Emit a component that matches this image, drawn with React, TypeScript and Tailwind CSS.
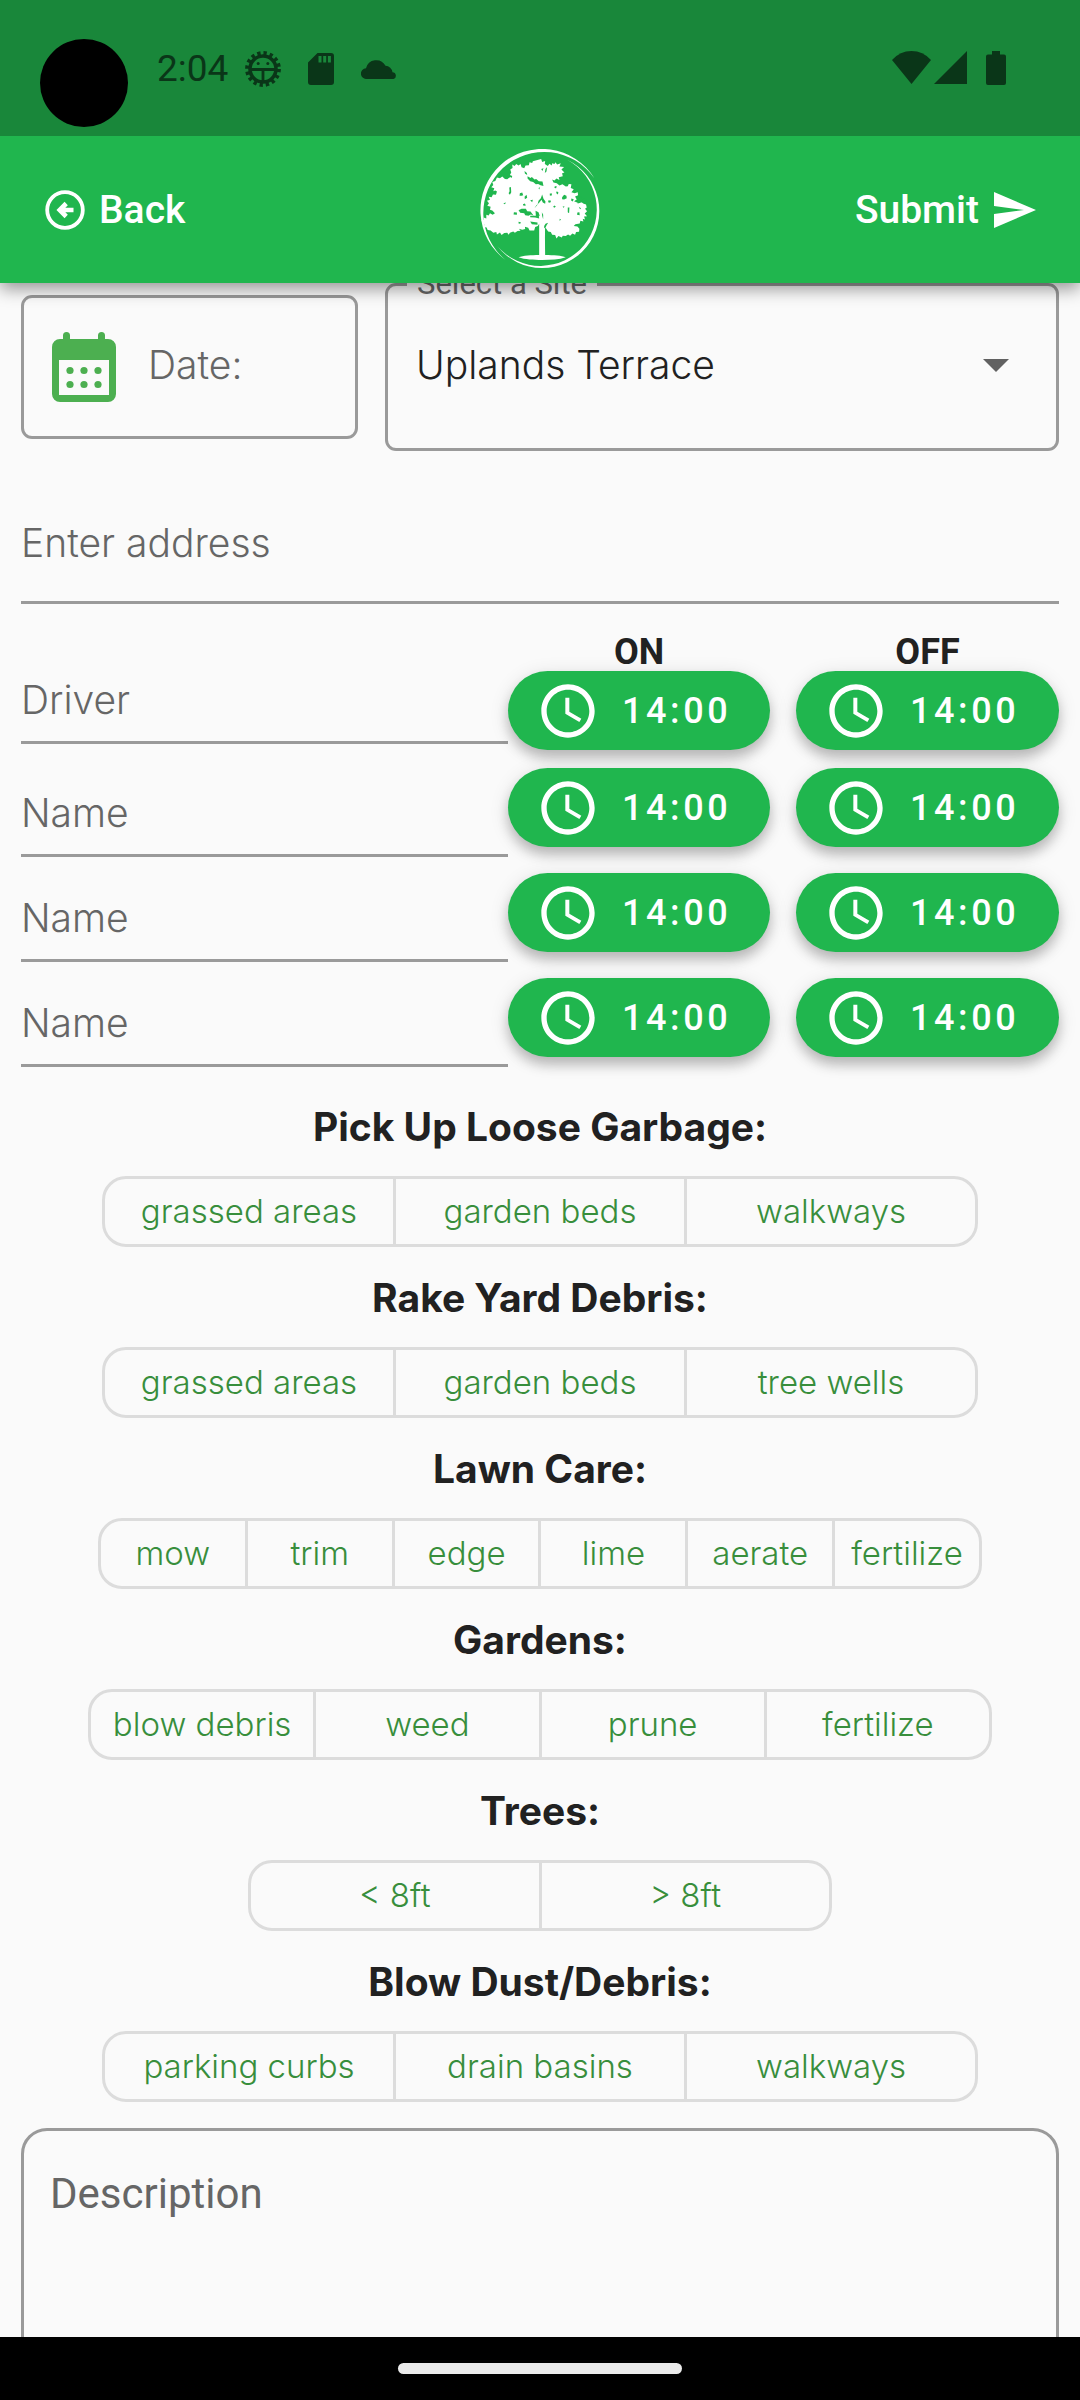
import React from 'react';

const sans = "font-['Inter','Noto_Sans',sans-serif]";

function DebugIcon() {
  return (
    <svg viewBox="0 0 36 36" className="size-[36px]" fill="none" stroke="currentColor" aria-hidden="true">
      <circle cx="18" cy="18" r="13" strokeWidth="3.6" />
      <circle cx="18" cy="18" r="16" strokeWidth="3.8" strokeDasharray="3.3 2.983" />
      <path d="M5 18.5h26M18 18.5v13" strokeWidth="2.8" />
      <g fill="currentColor" stroke="none">
        <circle cx="13.2" cy="12.6" r="1.5" />
        <circle cx="22.8" cy="12.6" r="1.5" />
      </g>
    </svg>
  );
}

function SdCardIcon() {
  return (
    <svg viewBox="0 0 26 32" className="h-[32px] w-[26px]" fill="currentColor" aria-hidden="true">
      <path
        fillRule="evenodd"
        d="M9.5 0H23a3 3 0 0 1 3 3v26a3 3 0 0 1-3 3H3a3 3 0 0 1-3-3V9.5zM10.500 3v6.500h3V3zm4.700 0v6.500h3V3zm4.700 0v6.500h3V3z"
      />
    </svg>
  );
}

function CloudIcon() {
  return (
    <svg viewBox="0 0 36 20" className="h-[20px] w-[36px]" fill="currentColor" aria-hidden="true">
      <path d="M5.500 20A5.300 5.300 0 0 1 5 9.300 10.500 10.500 0 0 1 24.500 6.800a7.200 7.200 0 0 1 7 6.400A3.500 3.500 0 0 1 32.500 20z" />
    </svg>
  );
}

function StatusBar() {
  return (
    <div className="relative z-20 flex h-[136px] shrink-0 items-start justify-between bg-[#19873a] text-[#0a3618]">
      <div className="flex items-center pl-10 pt-[25px]">
        <span className="mt-[14px] size-[88px] rounded-full bg-black" />
        <div className="flex items-center pb-[14px] pl-[29px]">
          <span className="w-[88px] text-[37px] leading-[44px]">2:04</span>
          <DebugIcon />
          <span className="pl-[27px]"><SdCardIcon /></span>
          <span className="pl-[27px]"><CloudIcon /></span>
        </div>
      </div>
      <div className="flex items-start pr-[74px] pt-[51px]">
        <svg viewBox="0 0 39 33" className="h-[33px] w-[39px]" fill="currentColor" aria-hidden="true">
          <path d="M0 9Q8 0 19.500 0T39 9L19.500 33z" />
        </svg>
        <svg viewBox="0 0 33 33" className="ml-[3px] size-[33px]" fill="currentColor" aria-hidden="true">
          <path d="M33 0v33H0z" />
        </svg>
        <svg viewBox="0 0 20 34" className="ml-[19px] h-[34px] w-[20px]" fill="currentColor" aria-hidden="true">
          <path d="M6 0h8v3.500h4q2 0 2 2V32q0 2-2 2H2q-2 0-2-2V5.500q0-2 2-2h4z" />
        </svg>
      </div>
    </div>
  );
}

function TreeLogo() {
  return (
    <svg viewBox="56 40 364 364" className="size-[121px]" fill="#fff" role="img" aria-label="Tree logo">
      <path d="M133 374A185 185 0 1 1 400 128A183.300 183.300 0 1 0 133 374Z" />
      <path d="M318 72A171.600 171.600 0 1 1 108 332A170 170 0 1 0 318 72Z" />
      <path d="M234 250h18c0 20-1 70 0 109 25 0 50 2 62 7-20 7-45 8-71 8s-52-1-71-8c14-5 38-7 62-7z" />
      <path d="M240 70l3 9 9-3-1 9 9 6 5-7 7 6 1-7 7 2 3-5 5 7 11-4-4 10 14 1-8 8 9 9-7 2 2 9-12 3 2 8-9-4-6 6-7-3 4 9 10 2 8 7 9-4 10 7 6-1 3-7 8 1-2 11 9 4-7 9 10 3 9-3 1 9-9 4 5 9-8 5 9 4 9-4 11 8 7 2 2 9-5 4 6 7-7 7 7 8-9 1 3 9-7-2 2 8-9-2-2 8-13 2-5 6 11 1 6 7-1 9-9 1-3 8-8-4-7 7-6-4-7 5-9-1-3 5-10-4-6 7-4-10-9-1-4-8-8-2-6-9-9-5-5-7-7-2-4 7-8 3-3 10h-14l-4-8-10-3 1 7-9 2-10-3 5 6-9 1-8 5-5-4-10 4-4 6-4-6-9 1-8 6-5-8-9 6-2-7-9 2-8-7-9-1-3-8-10-1 4-7-7-4 4-3-8-5 9-3-1-7 8 3 0-11 7 2 4-7 8 5 7-5-8-8-7-2 2-9-10-3 5-8-6-7 9-3-4-9 9 1 4-8 9 1 3-10-5-3-6 2 3-9-9-3 6-7-3-9 9-3 5-10 9 2 7-5 8 7 7 1 9-7 4 3 2-6-7-3 4-7-3-9 7-5-1-10 7 4 5-6 7 5 6-5 3 10 8 3 4-8 10-1 2-9 8 2 2-5z" />
      <g fill="#20b64e">
        <path d="M199 122l9 5 4-3 8 8 5-2 8 7 11 1 3 13-9-2-7-4-7 1-8-7-9-2-8-8zM190 106l7 6 1 6-7-4zM240 100l7-2-3 8zM253 100l5-6-2 14-5 4z" />
        <path d="M172 224l9-4 13 0 4 7 10 1 9 12-8-3-7 4-10-2-3-6-12-1zM158 230l9 1 0 7-10-1zM220 218l9-10 3-12 7-8 4-11 4 13 6 8-1 7-7-4-4-8-7 9-9 8zM223 226l9 4 4 12-3-2 1 9-12-3-15-1 0-4 17 0zM242 230l4 8 0 13-3-10zM207 258l22 3 0 7-17-2zM249 272l4-7 8-3-5 8-4 9-3-2z" />
        <path d="M176 173l7-2 3 8-5 2-6 0zM144 156l5-2 1 16-4 8-4-5 3-6zM190 184l6-6 2 9-7 4zM207 194l8-1-2 7zM185 206l6-2 3 6-7 1zM232 157l5-2-3 7zM266 174l7 0-2 7-5-1zM262 194l8 2-3 6-6-2zM281 152l6 0-2 6-5-1zM287 167l5 4-2 6-5-5zM303 185l6-7 7 3 1 7-8 4-6-1zM276 213l5-3 3 4-5 3zM305 212l6 2-5 3zM331 189l7 2-3 7-5-3zM348 199l10-3 11-6 10 4-8 2 9 10-6-1-7-7-9 4-8 2zM353 181l10 4 0 3-10-2zM320 216l5 0-1 17-4-3zM349 231l6-1 1 9-8-1zM353 214l7 4-3 3zM172 259l7 1-2 5-5-1zM126 203l8-2-3 5zM296 250l4 3-5 3z" />
      </g>
    </svg>
  );
}

function AppBar() {
  return (
    <header className="relative z-10 grid h-[147px] shrink-0 grid-cols-[1fr_auto_1fr] items-center bg-[#20b64e] px-[44px] text-white shadow-[0_6px_16px_rgba(0,0,0,0.4)]">
      <button type="button" className="flex items-center gap-[13px] justify-self-start text-[39px] font-medium leading-[46px]">
        <svg viewBox="0 0 42 42" className="size-[42px]" fill="none" stroke="currentColor" aria-hidden="true">
          <circle cx="21" cy="21" r="17.800" strokeWidth="3.800" />
          <path d="M29.500 21H16M22.200 14.500L15.700 21l6.500 6.500" strokeWidth="4.600" />
        </svg>
        Back
      </button>
      <TreeLogo />
      <button type="button" className="flex items-center gap-[15px] justify-self-end text-[39px] font-medium leading-[46px]">
        Submit
        <svg viewBox="2 3 21 18" className="h-[36px] w-[42px]" fill="currentColor" aria-hidden="true">
          <path d="M2.010 21L23 12 2.010 3 2 10l15 2-15 2z" />
        </svg>
      </button>
    </header>
  );
}

function SiteRow() {
  return (
    <div className="grid grid-cols-[minmax(0,1fr)_minmax(0,2fr)] items-center gap-[27px]">
      <label className="flex h-[144px] items-center gap-[32px] rounded-[11px] border-[3px] border-[#9a9a9a] pl-[28px]">
        <svg viewBox="0 0 64 70" className="h-[70px] w-[64px] shrink-0" fill="#4caf50" aria-hidden="true">
          <path
            fillRule="evenodd"
            d="M11 7V3.500a3.500 3.500 0 0 1 7 0V7h28V3.500a3.500 3.500 0 0 1 7 0V7h3a8 8 0 0 1 8 8v47a8 8 0 0 1-8 8H8a8 8 0 0 1-8-8V15a8 8 0 0 1 8-8zM7 28v35h50V28z"
          />
          <circle cx="18" cy="38.500" r="3.600" />
          <circle cx="32" cy="38.500" r="3.600" />
          <circle cx="46" cy="38.500" r="3.600" />
          <circle cx="18" cy="52.500" r="3.600" />
          <circle cx="32" cy="52.500" r="3.600" />
          <circle cx="46" cy="52.500" r="3.600" />
        </svg>
        <input
          aria-label="Date"
          placeholder="Date:"
          className={`${sans} w-full min-w-0 bg-transparent pb-1 text-[39px] font-light leading-[48px] outline-none placeholder:text-[#666] placeholder:opacity-100`}
        />
      </label>
      <div className="relative h-[168px]">
        <select
          id="site"
          className={`${sans} size-full appearance-none rounded-[11px] border-[3px] border-[#9a9a9a] bg-transparent pb-1 pl-[28px] pr-[80px] text-[39px] font-light text-[#212121] outline-none`}
        >
          <option>Uplands Terrace</option>
        </select>
        <label htmlFor="site" className="absolute -top-[17px] left-[22px] bg-[#fafafa] px-[10px] text-[31px] leading-[36px] text-[#666]">
          Select a Site
        </label>
        <svg viewBox="0 0 26 13" className="pointer-events-none absolute right-[50px] top-[76px] h-[13px] w-[26px]" fill="#616161" aria-hidden="true">
          <path d="M0 0h26L13 13z" />
        </svg>
      </div>
    </div>
  );
}

function TimeButton({ label }: { label: string }) {
  return (
    <button
      type="button"
      aria-label={label}
      className="flex h-[79px] w-full items-center rounded-full bg-[#20b64e] pl-[28px] text-white shadow-[0_8px_12px_rgba(0,0,0,0.2),0_4px_20px_rgba(0,0,0,0.12)]"
    >
      <svg viewBox="0 0 24 24" className="size-[64px]" fill="currentColor" aria-hidden="true">
        <path d="M11.990 2C6.470 2 2 6.480 2 12s4.470 10 9.990 10C17.520 22 22 17.520 22 12S17.520 2 11.990 2zM12 20c-4.420 0-8-3.580-8-8s3.580-8 8-8 8 3.580 8 8-3.580 8-8 8zM12.500 7H11v6l5.250 3.150.75-1.230-4.500-2.670z" />
      </svg>
      <span className="pl-[22px] text-[36px] font-medium leading-[44px] tracking-widest">14:00</span>
    </button>
  );
}

function Field({ placeholder }: { placeholder: string }) {
  return (
    <input
      aria-label={placeholder}
      placeholder={placeholder}
      className={`${sans} h-[99px] w-full min-w-0 border-b-[3px] border-[#9a9a9a] bg-transparent pt-[12px] text-[39px] font-light outline-none placeholder:text-[#666] placeholder:opacity-100`}
    />
  );
}

const crewGrid = 'grid grid-cols-[487fr_262fr_289fr]';

function Crew() {
  return (
    <div className="mt-[27px]">
      <div className={`${crewGrid} mb-2 items-end`}>
        <div className="pb-[6px]"><Field placeholder="Driver" /></div>
        <div>
          <div className="h-[40px] text-center text-[36px] font-bold leading-[42px] text-[#212121]">ON</div>
          <TimeButton label="Driver on 14:00" />
        </div>
        <div className="ml-[26px]">
          <div className="h-[40px] text-center text-[36px] font-bold leading-[42px] text-[#212121]">OFF</div>
          <TimeButton label="Driver off 14:00" />
        </div>
      </div>
      <div className="flex flex-col gap-[6px]">
        {[1, 2, 3].map((n) => (
          <div key={n} className={`${crewGrid} items-center`}>
            <Field placeholder="Name" />
            <TimeButton label={`Worker ${n} on 14:00`} />
            <div className="ml-[26px]"><TimeButton label={`Worker ${n} off 14:00`} /></div>
          </div>
        ))}
      </div>
    </div>
  );
}

const tasks = [
  { title: 'Pick Up Loose Garbage:', width: 'max-w-[876px]', items: ['grassed areas', 'garden beds', 'walkways'] },
  { title: 'Rake Yard Debris:', width: 'max-w-[876px]', items: ['grassed areas', 'garden beds', 'tree wells'] },
  { title: 'Lawn Care:', width: 'max-w-[884px]', items: ['mow', 'trim', 'edge', 'lime', 'aerate', 'fertilize'] },
  { title: 'Gardens:', width: 'max-w-[904px]', items: ['blow debris', 'weed', 'prune', 'fertilize'] },
  { title: 'Trees:', width: 'max-w-[584px]', items: ['< 8ft', '> 8ft'] },
  { title: 'Blow Dust/Debris:', width: 'max-w-[876px]', items: ['parking curbs', 'drain basins', 'walkways'] },
];

function Tasks() {
  return (
    <div className={`${sans} mt-[38px] flex flex-col gap-[29px]`}>
      {tasks.map((t) => (
        <section key={t.title} className="flex flex-col items-center gap-[27px]">
          <h2 className="text-[39px] font-bold leading-[44px] text-[#212121]">{t.title}</h2>
          <div className={`${t.width} flex h-[71px] w-full divide-x-[3px] divide-[#dcdcdc] rounded-[24px] border-[3px] border-[#dcdcdc]`}>
            {t.items.map((item) => (
              <button key={item} type="button" className="min-w-0 flex-1 whitespace-nowrap pb-px text-[33px] font-light leading-[44px] text-[#388e3c]">
                {item}
              </button>
            ))}
          </div>
        </section>
      ))}
    </div>
  );
}

export default function App() {
  return (
    <div className="flex h-screen flex-col bg-[#fafafa] font-['Roboto',sans-serif]">
      <StatusBar />
      <AppBar />
      <main className="min-h-0 flex-1 overflow-y-auto px-[21px] [scrollbar-width:none]">
        <SiteRow />
        <input
          aria-label="Enter address"
          placeholder="Enter address"
          className={`${sans} mt-8 h-[121px] w-full border-b-[3px] border-[#9a9a9a] bg-transparent text-[39px] font-light outline-none placeholder:text-[#666] placeholder:opacity-100`}
        />
        <Crew />
        <Tasks />
        <textarea
          aria-label="Description"
          placeholder="Description"
          className="mt-[26px] block h-[320px] w-full resize-none rounded-[26px] border-[3px] border-[#9a9a9a] bg-transparent px-[26px] py-[38px] text-[42px] leading-[50px] outline-none placeholder:text-[#666] placeholder:opacity-100"
        />
      </main>
      <div className="flex h-[63px] shrink-0 items-center justify-center bg-black">
        <span className="h-[11px] w-[284px] rounded-full bg-[#ebebeb]" />
      </div>
    </div>
  );
}
